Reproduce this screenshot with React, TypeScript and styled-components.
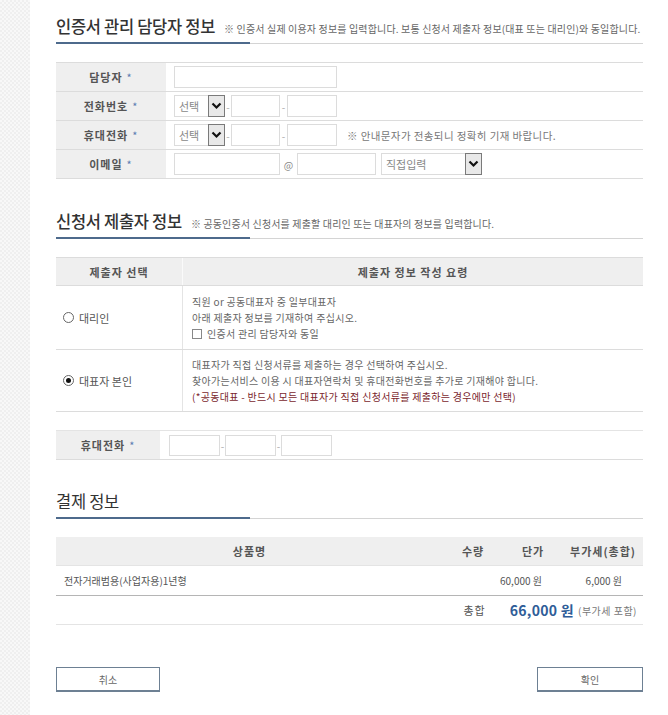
import React from "react";
import styled, { createGlobalStyle } from "styled-components";

const GlobalStyle = createGlobalStyle`
  html, body { margin: 0; padding: 0; background: #fff; }
  body { font-family: "Noto Sans CJK KR", "Noto Sans", sans-serif; color: #555; }
  * { box-sizing: border-box; }
`;

const Page = styled.div`
  display: flex;
  width: 668px;
  min-height: 715px;
`;

const SideStrip = styled.div`
  width: 30px;
  flex-shrink: 0;
  background-color: #f5f5f5;
  background-image: repeating-conic-gradient(#efefef 0 25%, #f8f8f8 0 50%);
  background-size: 4px 4px;
`;

const Main = styled.main`
  width: 587px;
  margin-left: 26px;
  padding-top: 16px;
`;

const SectionHead = styled.div<{ $top?: number }>`
  display: flex;
  align-items: baseline;
  gap: 9px;
  height: 20px;
  margin-top: ${(p) => p.$top ?? 0}px;
  margin-bottom: 6px;
`;

const Title = styled.h2<{ $bold?: boolean }>`
  margin: 0;
  font-size: 16.5px;
  line-height: 20px;
  font-weight: ${(p) => (p.$bold ? 500 : 400)};
  color: #333;
  letter-spacing: -0.3px;
  white-space: nowrap;
`;

const HeadNote = styled.span`
  font-size: 10px;
  color: #666;
  letter-spacing: 0.15px;
  white-space: nowrap;
`;

const Rule = styled.div`
  display: flex;
  align-items: flex-end;
  height: 2px;
  margin-bottom: 18px;
`;

const RuleAccent = styled.div`
  width: 194px;
  height: 2px;
  background: #4d6a8c;
`;

const RuleLine = styled.div`
  flex: 1;
  height: 1px;
  background: #d4d4d4;
`;

const FormTable = styled.div`
  border-top: 1px solid #dcdcdc;
`;

const FormRow = styled.div<{ $labelW?: number }>`
  display: grid;
  grid-template-columns: ${(p) => p.$labelW ?? 110}px 1fr;
  height: 29px;
  border-bottom: 1px solid #dcdcdc;
`;

const Label = styled.div`
  background: #efefef;
  display: flex;
  align-items: center;
  justify-content: center;
  font-size: 11px;
  font-weight: 700;
  color: #555;
  letter-spacing: 1px;
`;

const Star = styled.span`
  color: #5b7db1;
  margin-left: 4px;
  font-weight: 400;
`;

const Field = styled.div<{ $pad?: number }>`
  display: flex;
  align-items: center;
  padding-left: ${(p) => p.$pad ?? 8}px;
`;

const TextInput = styled.input<{ $w: number; $h?: number }>`
  width: ${(p) => p.$w}px;
  height: ${(p) => p.$h ?? 22}px;
  border: 1px solid #dcdcdc;
  padding: 0 4px;
  font: inherit;
  font-size: 11px;
  background: #fff;
  outline: none;
`;

const Dash = styled.span<{ $w?: number }>`
  width: ${(p) => p.$w ?? 6}px;
  text-align: center;
  font-size: 10px;
  color: #aaa;
`;

const At = styled.span`
  width: 17px;
  text-align: center;
  font-size: 10px;
  color: #888;
`;

const SelectBox = styled.div<{ $w: number; $gap?: number }>`
  width: ${(p) => p.$w}px;
  height: 22px;
  margin-left: ${(p) => p.$gap ?? 0}px;
  border: 1px solid #dcdcdc;
  display: flex;
  align-items: center;
  justify-content: space-between;
  padding-left: 4px;
  font-size: 11px;
  color: #888;
`;

const SelectArrow = styled.span`
  width: 17px;
  height: 22px;
  margin-right: -1px;
  border: 1px solid #7a7a7a;
  background: #e8e8e8;
  display: flex;
  align-items: center;
  justify-content: center;
`;

const FieldNote = styled.span`
  margin-left: 10px;
  font-size: 10.5px;
  color: #777;
  letter-spacing: 0.4px;
  white-space: nowrap;
`;

const InfoTable = styled.div`
  border-top: 1px solid #dcdcdc;
`;

const InfoRow = styled.div<{ $h: number; $head?: boolean }>`
  display: grid;
  grid-template-columns: 127px 1fr;
  height: ${(p) => p.$h}px;
  border-bottom: 1px solid #dcdcdc;
  background: ${(p) => (p.$head ? "#efefef" : "#fff")};
`;

const HeadCell = styled.div<{ $divider?: boolean }>`
  display: flex;
  align-items: center;
  justify-content: center;
  font-size: 11px;
  font-weight: 700;
  letter-spacing: 1px;
  color: #555;
  border-right: ${(p) => (p.$divider ? "1px solid #fafafa" : "none")};
`;

const ChoiceCell = styled.div`
  display: flex;
  align-items: center;
  gap: 5px;
  padding-left: 7px;
  border-right: 1px solid #e4e4e4;
  font-size: 11px;
  color: #555;
`;

const GuideCell = styled.div`
  display: flex;
  flex-direction: column;
  justify-content: center;
  padding-left: 9px;
  font-size: 10px;
  line-height: 16px;
  color: #666;
  letter-spacing: 0.3px;
  white-space: nowrap;
`;

const Warn = styled.span`
  color: #7b1f2e;
`;

const Radio = styled.span<{ $checked?: boolean }>`
  width: 11px;
  height: 11px;
  border-radius: 50%;
  border: 1px solid #666;
  display: inline-flex;
  align-items: center;
  justify-content: center;
  &::after {
    content: "";
    width: 5px;
    height: 5px;
    border-radius: 50%;
    background: ${(p) => (p.$checked ? "#111" : "transparent")};
  }
`;

const CheckLine = styled.span`
  display: flex;
  align-items: center;
  gap: 5px;
`;

const Checkbox = styled.span`
  width: 10px;
  height: 10px;
  border: 1px solid #888;
  background: #fff;
`;

const PhoneBlock = styled.div`
  margin-top: 18px;
  border-top: 1px solid #e4e4e4;
`;

const PayTable = styled.div``;

const PayRow = styled.div<{ $head?: boolean; $h: number; $line: string }>`
  display: grid;
  grid-template-columns: 387px 60px 60px 80px;
  height: ${(p) => p.$h}px;
  background: ${(p) => (p.$head ? "#efefef" : "#fff")};
  border-bottom: 1px solid ${(p) => p.$line};
`;

const PayHead = styled.div`
  display: flex;
  align-items: center;
  justify-content: center;
  font-size: 11px;
  font-weight: 700;
  letter-spacing: 1px;
  color: #555;
`;

const PayCell = styled.div<{ $align?: "left" | "right" }>`
  display: flex;
  align-items: center;
  justify-content: ${(p) => (p.$align === "right" ? "flex-end" : "flex-start")};
  padding: ${(p) => (p.$align === "right" ? "0 21px 0 0" : "0 0 0 8px")};
  font-size: 10px;
  color: #555;
  white-space: nowrap;
`;

const TotalCell = styled.div`
  grid-column: 1 / -1;
  display: flex;
  align-items: center;
  justify-content: flex-end;
  padding-right: 6px;
  font-size: 11px;
  color: #555;
`;

const TotalLabel = styled.span`
  margin-right: 24px;
  letter-spacing: 1px;
`;

const TotalAmount = styled.span`
  font-size: 14px;
  font-weight: 700;
  color: #2f5d98;
  letter-spacing: 0.3px;
`;

const TotalNote = styled.span`
  margin-left: 4px;
  font-size: 10px;
  color: #777;
  letter-spacing: 0.5px;
`;

const ButtonRow = styled.div`
  display: flex;
  justify-content: space-between;
  margin-top: 42px;
`;

const Button = styled.button<{ $w: number }>`
  width: ${(p) => p.$w}px;
  height: 25px;
  background: #fff;
  border: 1px solid #6d8093;
  border-bottom-width: 2px;
  font-family: inherit;
  font-size: 10px;
  color: #666;
  padding: 0;
`;

const Chevron = () => (
  <svg width="11" height="8" viewBox="0 0 11 8">
    <path d="M1.5 1.5 L5.5 5.5 L9.5 1.5" fill="none" stroke="#111" strokeWidth="2.2" />
  </svg>
);

const Select = ({ w, text, gap }: { w: number; text: string; gap?: number }) => (
  <SelectBox $w={w} $gap={gap}>
    <span>{text}</span>
    <SelectArrow>
      <Chevron />
    </SelectArrow>
  </SelectBox>
);

const Req = () => <Star>*</Star>;

export default function App() {
  return (
    <>
      <GlobalStyle />
      <Page>
        <SideStrip />
        <Main>
          <SectionHead>
            <Title $bold>인증서 관리 담당자 정보</Title>
            <HeadNote>
              ※ 인증서 실제 이용자 정보를 입력합니다. 보통 신청서 제출자 정보(대표 또는 대리인)와 동일합니다.
            </HeadNote>
          </SectionHead>
          <Rule>
            <RuleAccent />
            <RuleLine />
          </Rule>

          <FormTable>
            <FormRow>
              <Label>
                담당자<Req />
              </Label>
              <Field>
                <TextInput $w={163} />
              </Field>
            </FormRow>
            <FormRow>
              <Label>
                전화번호<Req />
              </Label>
              <Field>
                <Select w={51} text="선택" />
                <Dash>-</Dash>
                <TextInput $w={49} />
                <Dash $w={7}>-</Dash>
                <TextInput $w={50} />
              </Field>
            </FormRow>
            <FormRow>
              <Label>
                휴대전화<Req />
              </Label>
              <Field>
                <Select w={51} text="선택" />
                <Dash>-</Dash>
                <TextInput $w={49} />
                <Dash $w={7}>-</Dash>
                <TextInput $w={50} />
                <FieldNote>※ 안내문자가 전송되니 정확히 기재 바랍니다.</FieldNote>
              </Field>
            </FormRow>
            <FormRow>
              <Label>
                이메일<Req />
              </Label>
              <Field>
                <TextInput $w={106} />
                <At>@</At>
                <TextInput $w={79} />
                <Select w={101} text="직접입력" gap={5} />
              </Field>
            </FormRow>
          </FormTable>

          <SectionHead $top={32}>
            <Title $bold>신청서 제출자 정보</Title>
            <HeadNote>※ 공동인증서 신청서를 제출할 대리인 또는 대표자의 정보를 입력합니다.</HeadNote>
          </SectionHead>
          <Rule>
            <RuleAccent />
            <RuleLine />
          </Rule>

          <InfoTable>
            <InfoRow $h={28} $head>
              <HeadCell $divider>제출자 선택</HeadCell>
              <HeadCell>제출자 정보 작성 요령</HeadCell>
            </InfoRow>
            <InfoRow $h={64}>
              <ChoiceCell>
                <Radio />
                대리인
              </ChoiceCell>
              <GuideCell>
                <span>직원 or 공동대표자 중 일부대표자</span>
                <span>아래 제출자 정보를 기재하여 주십시오.</span>
                <CheckLine>
                  <Checkbox />
                  인증서 관리 담당자와 동일
                </CheckLine>
              </GuideCell>
            </InfoRow>
            <InfoRow $h={62}>
              <ChoiceCell>
                <Radio $checked />
                대표자 본인
              </ChoiceCell>
              <GuideCell>
                <span>대표자가 직접 신청서류를 제출하는 경우 선택하여 주십시오.</span>
                <span>찾아가는서비스 이용 시 대표자연락처 및 휴대전화번호를 추가로 기재해야 합니다.</span>
                <Warn>(*공동대표 - 반드시 모든 대표자가 직접 신청서류를 제출하는 경우에만 선택)</Warn>
              </GuideCell>
            </InfoRow>
          </InfoTable>

          <PhoneBlock>
            <FormRow $labelW={104}>
              <Label>
                휴대전화<Req />
              </Label>
              <Field $pad={9}>
                <TextInput $w={51} $h={21} />
                <Dash $w={5}>-</Dash>
                <TextInput $w={51} $h={21} />
                <Dash $w={5}>-</Dash>
                <TextInput $w={51} $h={21} />
              </Field>
            </FormRow>
          </PhoneBlock>

          <SectionHead $top={31}>
            <Title>결제 정보</Title>
          </SectionHead>
          <Rule>
            <RuleAccent />
            <RuleLine />
          </Rule>

          <PayTable>
            <PayRow $head $h={29} $line="#e4e4e4">
              <PayHead>상품명</PayHead>
              <PayHead>수량</PayHead>
              <PayHead>단가</PayHead>
              <PayHead>부가세(총합)</PayHead>
            </PayRow>
            <PayRow $h={30} $line="#b5b5b5">
              <PayCell>전자거래범용(사업자용)1년형</PayCell>
              <PayCell $align="right"></PayCell>
              <PayCell $align="right">60,000 원</PayCell>
              <PayCell $align="right">6,000 원</PayCell>
            </PayRow>
            <PayRow $h={29} $line="#e4e4e4">
              <TotalCell>
                <TotalLabel>총합</TotalLabel>
                <TotalAmount>66,000 원</TotalAmount>
                <TotalNote>(부가세 포함)</TotalNote>
              </TotalCell>
            </PayRow>
          </PayTable>

          <ButtonRow>
            <Button $w={104}>취소</Button>
            <Button $w={106}>확인</Button>
          </ButtonRow>
        </Main>
      </Page>
    </>
  );
}
